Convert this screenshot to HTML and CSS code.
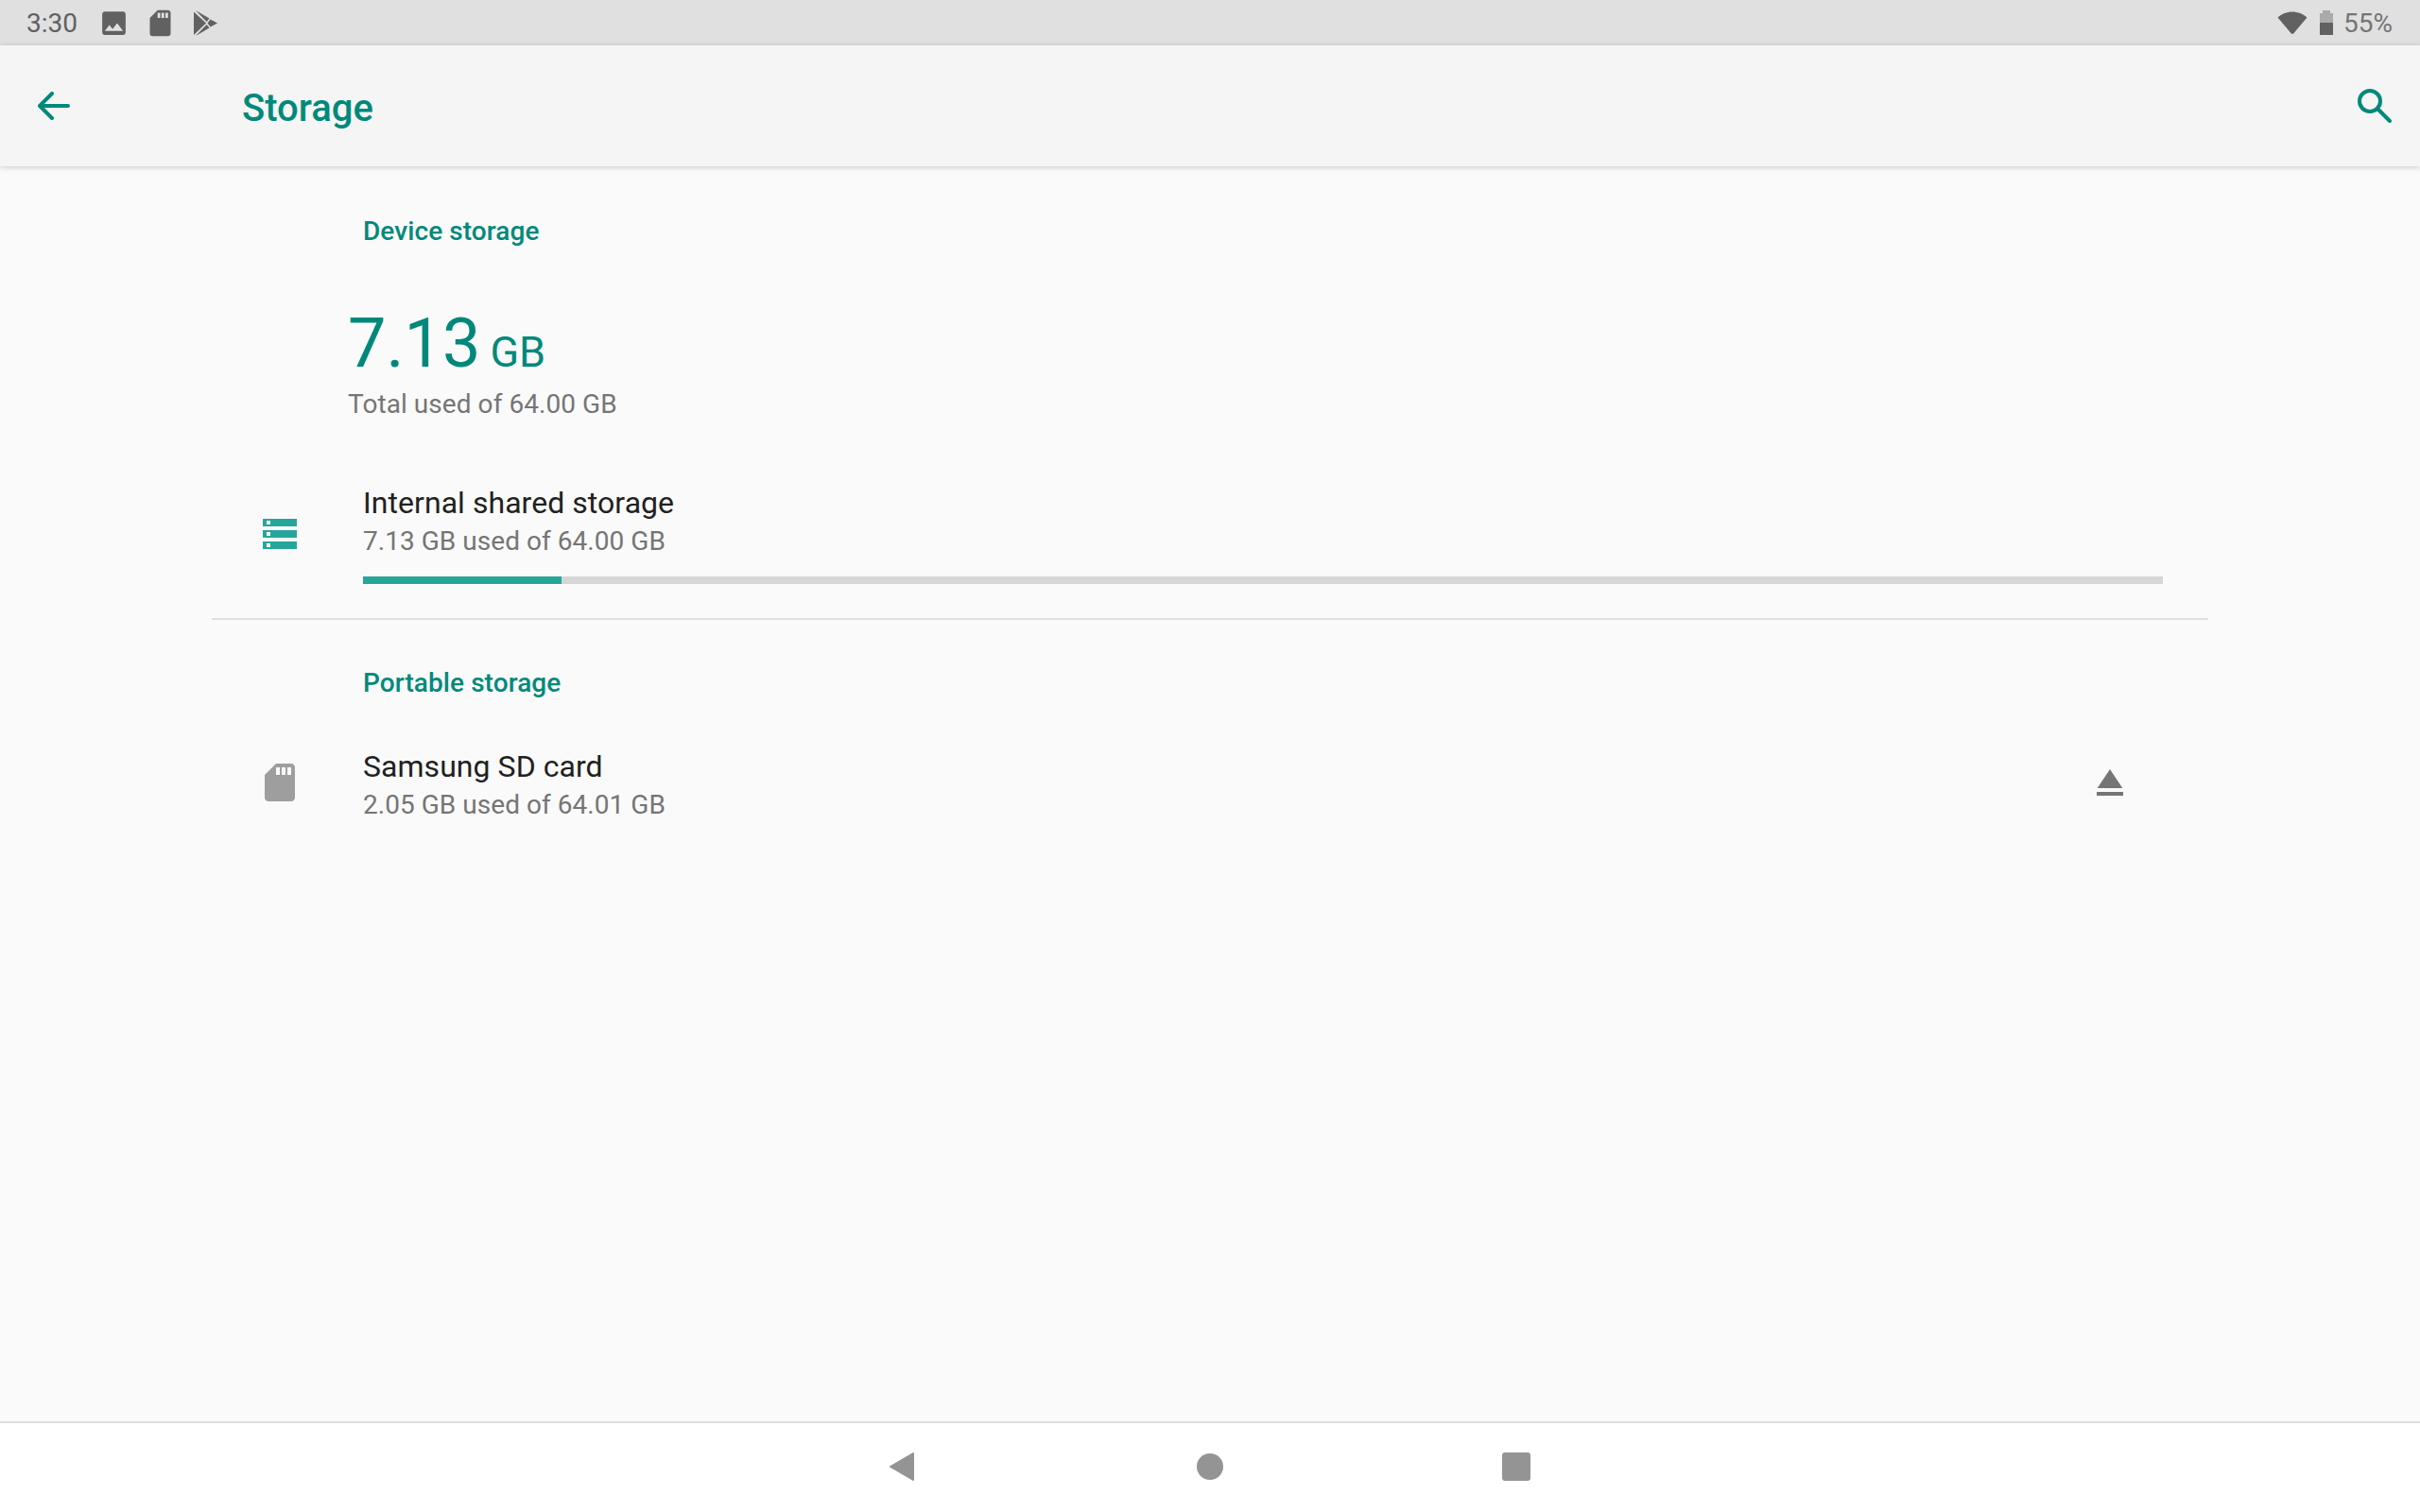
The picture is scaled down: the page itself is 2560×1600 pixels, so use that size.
FILE: index.html
```html
<!DOCTYPE html>
<html lang="en">
<head>
    <meta charset="UTF-8">
    <title>Storage</title>
    <link rel="stylesheet" href="styles.css">
</head>
<body>
    <div class="status-bar">
        <div class="status-left">
            <span class="time">3:30</span>
            <svg class="note-icon" viewBox="0 0 24 24"><path d="M21 19V5c0-1.1-.9-2-2-2H5c-1.1 0-2 .9-2 2v14c0 1.1.9 2 2 2h14c1.1 0 2-.9 2-2zM8.5 13.5l2.5 3.01L14.5 12l4.5 6H5l3.5-4.5z"/></svg>
            <svg class="note-icon" viewBox="0 0 24 24"><path d="M18 2h-8L4.02 8 4 20c0 1.1.9 2 2 2h12c1.1 0 2-.9 2-2V4c0-1.1-.9-2-2-2zm-6 6h-2V4h2v4zm3 0h-2V4h2v4zm3 0h-2V4h2v4z"/></svg>
            <svg class="play-icon" viewBox="0 0 25 27"><path d="M0 1.5 13 13.500 0 26z"/><path d="M2 0 16.500 8.500 13.600 12z"/><path d="M13.600 15 16.500 18.500 2 27z"/><path d="M17.500 9.500 25 13.500 17.500 17.500 14.500 13.500z"/></svg>
        </div>
        <div class="status-right">
            <svg class="wifi-icon" viewBox="0 0 32 24"><path d="M.5 6.500C4.500 2.800 10 .5 16 .5s11.500 2.300 15.500 6L17.400 23.200c-.7.900-2.100.9-2.800 0z"/></svg>
            <div class="battery">
                <div class="battery-nub"></div>
                <div class="battery-empty"></div>
                <div class="battery-full"></div>
            </div>
            <span class="percent">55%</span>
        </div>
    </div>

    <header class="toolbar">
        <svg class="back-icon" viewBox="0 0 34 30"><path d="M32 15H3M15 2 2 15l13 13"/></svg>
        <h1 class="title">Storage</h1>
        <svg class="search-icon" viewBox="0 0 36 36"><circle cx="13" cy="13" r="11"/><path d="M21 21 34 34"/></svg>
    </header>

    <main class="content">
        <section class="group group-device">
            <h2 class="group-title">Device storage</h2>
            <div class="summary">
                <div class="summary-value">7.13<span class="summary-unit">GB</span></div>
                <div class="summary-text">Total used of 64.00 GB</div>
            </div>
            <div class="row">
                <div class="row-icon">
                    <svg class="storage-icon" viewBox="0 0 36 32"><path d="M0 0h36v8H0zM4 2v4h4V2zM0 12h36v8H0zM4 14v4h4v-4zM0 24h36v8H0zM4 26v4h4v-4z"/></svg>
                </div>
                <div class="row-body">
                    <div class="row-title">Internal shared storage</div>
                    <div class="row-text">7.13 GB used of 64.00 GB</div>
                    <div class="progress"><div class="progress-fill" style="width: 11.05%"></div></div>
                </div>
            </div>
        </section>

        <section class="group">
            <h2 class="group-title">Portable storage</h2>
            <div class="row row-sd">
                <div class="row-icon">
                    <svg class="sd-icon" viewBox="0 0 24 24"><path d="M18 2h-8L4.02 8 4 20c0 1.1.9 2 2 2h12c1.1 0 2-.9 2-2V4c0-1.1-.9-2-2-2zm-6 6h-2V4h2v4zm3 0h-2V4h2v4zm3 0h-2V4h2v4z"/></svg>
                </div>
                <div class="row-body">
                    <div class="row-title">Samsung SD card</div>
                    <div class="row-text">2.05 GB used of 64.01 GB</div>
                </div>
                <svg class="eject-icon" viewBox="0 0 24 24"><path d="M5 17h14v2H5zm7-12L5.33 15h13.34z"/></svg>
            </div>
        </section>
    </main>

    <nav class="nav-bar">
        <svg class="nav-back" viewBox="0 0 28 32"><path d="M26 2 2 16l24 14z"/></svg>
        <div class="nav-home"></div>
        <div class="nav-recent"></div>
    </nav>
</body>
</html>
```

FILE: styles.css
```css
* {
    box-sizing: border-box;
}
body {
    margin: 0;
    width: 2560px;
    height: 1600px;
    display: flex;
    flex-direction: column;
    overflow: hidden;
    background-color: #fafafa;
    font-family: Roboto, "Liberation Sans", sans-serif;
}

/* status bar */
.status-bar {
    height: 48px;
    padding: 0 29px 0 28px;
    display: flex;
    justify-content: space-between;
    align-items: center;
    background-color: #e0e0e0;
}
.status-left,
.status-right {
    display: flex;
    align-items: center;
}
.time {
    width: 76px;
    font-size: 28px;
    color: #616161;
}
.note-icon {
    width: 33px;
    height: 33px;
    margin-right: 16px;
    fill: #616161;
}
.play-icon {
    width: 25px;
    height: 27px;
    margin-left: 3px;
    fill: #616161;
}
.wifi-icon {
    width: 32px;
    height: 24px;
    fill: #616161;
}
.battery {
    width: 14px;
    height: 26px;
    margin: 0 11px 0 13px;
    display: flex;
    flex-direction: column;
    align-items: center;
}
.battery-nub {
    width: 8px;
    height: 3px;
    background-color: #aaa;
}
.battery-empty {
    width: 14px;
    height: 10px;
    background-color: #aaa;
}
.battery-full {
    width: 14px;
    height: 13px;
    background-color: #616161;
}
.percent {
    font-size: 28px;
    color: #757575;
}

/* toolbar */
.toolbar {
    height: 128px;
    padding: 0 30px 0 40px;
    display: flex;
    align-items: center;
    background-color: #f5f5f5;
    box-shadow: 0 1px 6px rgba(0, 0, 0, 0.2);
    position: relative;
}
.back-icon {
    width: 34px;
    height: 30px;
    fill: none;
    stroke: #00897b;
    stroke-width: 4;
    stroke-linecap: round;
    stroke-linejoin: round;
}
.title {
    flex: 1;
    margin: 5px 0 0 182px;
    font-size: 40px;
    font-weight: 500;
    color: #00897b;
}
.search-icon {
    width: 36px;
    height: 36px;
    fill: none;
    stroke: #00897b;
    stroke-width: 4;
    stroke-linecap: round;
}

/* list */
.content {
    flex: 1;
    margin: 0 224px;
}
.group-device {
    padding-bottom: 36px;
    border-bottom: 2px solid #dedede;
}
.group-title {
    margin: 0;
    padding: 47px 0 0 160px;
    font-size: 28px;
    line-height: 40px;
    font-weight: 500;
    letter-spacing: 0.08px;
    color: #00897b;
}
.group-device .group-title {
    padding-top: 49px;
}
.summary {
    padding: 64px 0 0 144px;
}
.summary-value {
    font-size: 72px;
    line-height: 70px;
    color: #00897b;
}
.summary-unit {
    margin-left: 10px;
    font-size: 45px;
}
.summary-text {
    font-size: 28px;
    line-height: 40px;
    letter-spacing: 0.06px;
    color: #757575;
}
.row {
    padding-top: 64px;
    display: flex;
    align-items: center;
}
.row-icon {
    width: 160px;
    padding-right: 16px;
    display: flex;
    justify-content: center;
    align-items: center;
}
.storage-icon {
    width: 36px;
    height: 32px;
    fill: #26a69a;
    fill-rule: evenodd;
}
.sd-icon {
    width: 48px;
    height: 48px;
    fill: #9e9e9e;
}
.row-body {
    flex: 1;
    padding-right: 48px;
}
.row-title {
    font-size: 32px;
    line-height: 40px;
    letter-spacing: 0.05px;
    color: #212121;
}
.row-text {
    margin-top: 1px;
    font-size: 28px;
    line-height: 40px;
    letter-spacing: 0.04px;
    color: #757575;
}
.progress {
    height: 8px;
    margin-top: 17px;
    background-color: #d6d6d6;
}
.progress-fill {
    height: 8px;
    background-color: #26a69a;
}
.row-sd {
    padding-top: 48px;
}
.row-sd .row-icon {
    margin-bottom: 7px;
}
.eject-icon {
    width: 48px;
    height: 48px;
    margin: 0 80px 7px 0;
    fill: #757575;
}

/* navigation bar */
.nav-bar {
    height: 96px;
    padding: 0 2px 2px 0;
    display: flex;
    justify-content: center;
    align-items: center;
    background-color: #fff;
    border-top: 2px solid #dedede;
}
.nav-back {
    width: 28px;
    height: 32px;
    margin-right: 298px;
    fill: #949494;
    stroke: #949494;
    stroke-width: 2;
    stroke-linejoin: round;
}
.nav-home {
    width: 28px;
    height: 28px;
    margin-right: 295px;
    border-radius: 50%;
    background-color: #949494;
}
.nav-recent {
    width: 30px;
    height: 30px;
    border-radius: 3px;
    background-color: #949494;
}
```
